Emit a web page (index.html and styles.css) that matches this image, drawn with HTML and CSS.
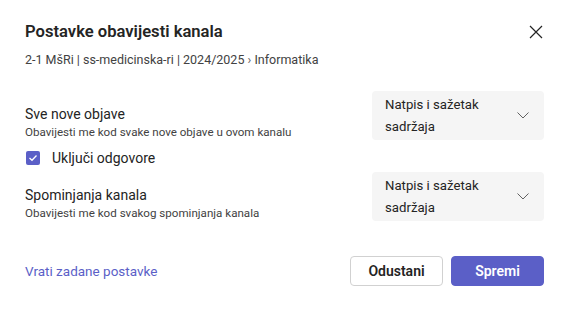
FILE: index.html
```html
<!DOCTYPE html>
<html lang="hr">
<head>
  <meta charset="UTF-8" />
  <title>Postavke obavijesti kanala</title>
  <link rel="stylesheet" href="styles.css">
</head>
<body>
  <div class="dialog">
    <div class="header">
      <h2>Postavke obavijesti kanala</h2>
      <button class="close" aria-label="Zatvori">
        <svg width="14" height="14" viewBox="0 0 14 14"><path d="M1 1L13 13M13 1L1 13" stroke="#242424" stroke-width="1.2" fill="none"/></svg>
      </button>
    </div>
    <div class="path">2-1 MšRi | ss-medicinska-ri | 2024/2025 <span class="sep">&#8250;</span> Informatika</div>

    <div class="row first">
      <div class="info">
        <div class="label">Sve nove objave</div>
        <div class="desc">Obavijesti me kod svake nove objave u ovom kanalu</div>
        <label class="check">
          <span class="box">
            <svg width="10" height="8" viewBox="0 0 10 8"><path d="M1.5 4L4 6.3L8.5 1.5" stroke="#fff" stroke-width="1.3" fill="none"/></svg>
          </span>
          Uključi odgovore
        </label>
      </div>
      <div class="select">
        <span>Natpis i sažetak sadržaja</span>
        <svg width="12" height="7" viewBox="0 0 12 7"><path d="M0.5 0.5L6 6L11.5 0.5" stroke="#616161" stroke-width="1" fill="none"/></svg>
      </div>
    </div>

    <div class="row second">
      <div class="info">
        <div class="label">Spominjanja kanala</div>
        <div class="desc">Obavijesti me kod svakog spominjanja kanala</div>
      </div>
      <div class="select">
        <span>Natpis i sažetak sadržaja</span>
        <svg width="12" height="7" viewBox="0 0 12 7"><path d="M0.5 0.5L6 6L11.5 0.5" stroke="#616161" stroke-width="1" fill="none"/></svg>
      </div>
    </div>

    <div class="footer">
      <a href="#" class="reset">Vrati zadane postavke</a>
      <div class="actions">
        <button class="btn">Odustani</button>
        <button class="btn primary">Spremi</button>
      </div>
    </div>
  </div>
</body>
</html>
```

FILE: styles.css
```css
body {
  margin: 0;
  background: #fff;
  font-family: Roboto, "Open Sans", sans-serif;
  color: #242424;
}

.dialog {
  padding: 18px 23px 0 25px;
}

.header {
  display: flex;
  justify-content: space-between;
  align-items: center;
}

h2 {
  margin: 0;
  font-size: 16.6px;
  font-weight: 600;
  line-height: 28px;
}

.close {
  background: none;
  border: none;
  padding: 0;
  margin-right: 1px;
  display: flex;
}

.path {
  margin-top: 4px;
  font-size: 12.5px;
  color: #424242;
  line-height: 20px;
}

.sep {
  color: #616161;
}

.row {
  display: flex;
  justify-content: space-between;
  align-items: flex-start;
}

.row.first {
  margin-top: 21px;
}

.row.second {
  margin-top: 4px;
}

.label {
  font-size: 14px;
  line-height: 20px;
  margin-top: 13px;
}

.desc {
  font-size: 11.6px;
  color: #424242;
  line-height: 16px;
}

.check {
  display: flex;
  align-items: center;
  gap: 12px;
  margin-top: 8px;
  font-size: 14px;
  line-height: 20px;
}

.box {
  width: 14px;
  height: 14px;
  border-radius: 2px;
  background: #5b5fc7;
  display: flex;
  align-items: center;
  justify-content: center;
  margin-left: 1px;
}

.select {
  width: 172px;
  height: 49px;
  box-sizing: border-box;
  background: #f5f5f5;
  border-radius: 4px;
  display: flex;
  align-items: center;
  justify-content: space-between;
  padding: 0 15px 0 13px;
  font-size: 13.2px;
  line-height: 22px;
}

.select span {
  width: 120px;
}

.footer {
  display: flex;
  justify-content: space-between;
  align-items: center;
  margin-top: 35px;
}

.reset {
  color: #5b5fc7;
  text-decoration: none;
  font-size: 13.5px;
}

.actions {
  display: flex;
  gap: 8px;
}

.btn {
  font-family: inherit;
  font-size: 14px;
  font-weight: 600;
  height: 30px;
  width: 93px;
  border-radius: 4px;
  border: 1px solid #d1d1d1;
  background: #fff;
  color: #242424;
}

.btn.primary {
  background: #5b5fc7;
  border-color: #5b5fc7;
  color: #fff;
}
```
